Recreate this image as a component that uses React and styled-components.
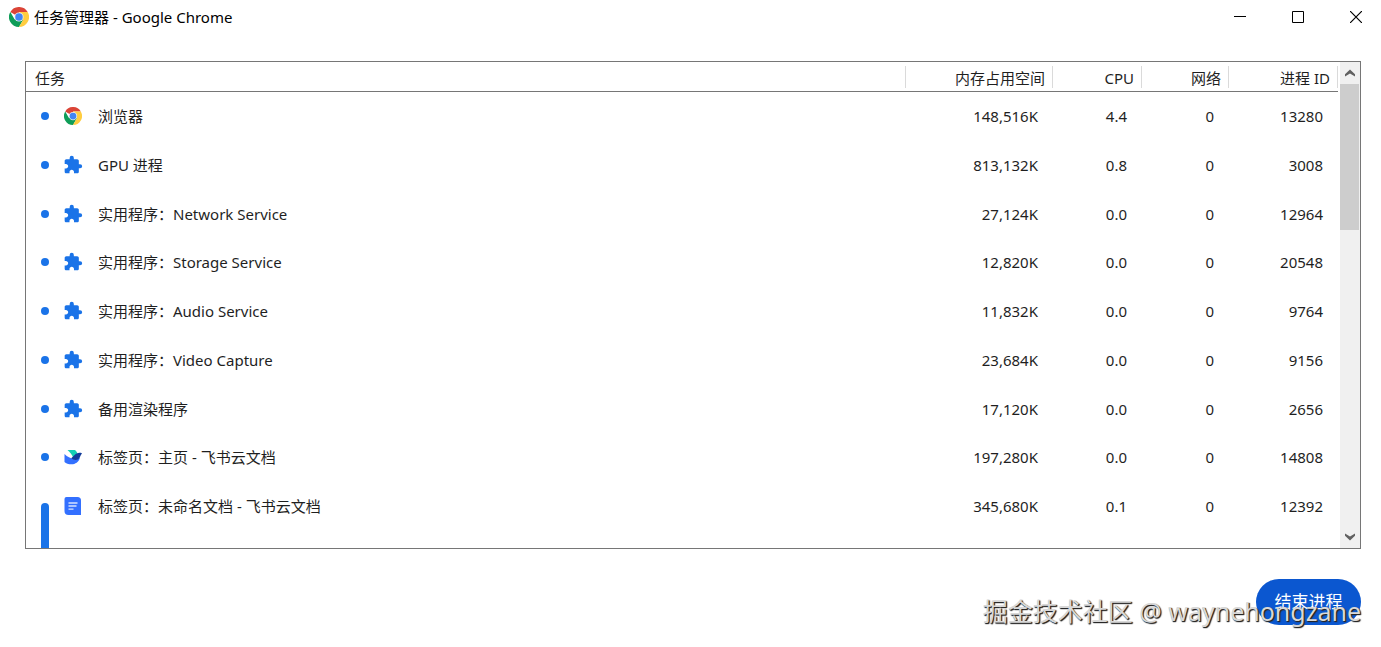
import React from 'react';
import styled, { createGlobalStyle } from 'styled-components';
import { MdExtension } from 'react-icons/md';

const GlobalStyle = createGlobalStyle`
  *, *::before, *::after { box-sizing: border-box; }
  body {
    margin: 0;
    background: #fff;
    color: #1f1f1f;
    font: 15px/20px "Noto Sans", "Noto Sans CJK SC", sans-serif;
  }
  button { font: inherit; border: 0; padding: 0; }
`;

const Window = styled.div`
  position: relative;
  display: flex;
  flex-direction: column;
  height: 100vh;
  min-height: 320px;
  overflow: hidden;
`;

const TitleBar = styled.header`
  display: flex;
  align-items: center;
  gap: 5px;
  height: 34px;
  padding-left: 9px;
  flex: none;
`;

const Title = styled.h1`
  margin: 0;
  flex: 1;
  font-size: 15px;
  font-weight: 400;
  color: #000;
`;

const WindowControls = styled.div`
  display: flex;
  gap: 8px;
`;

const ControlButton = styled.button`
  display: flex;
  align-items: center;
  justify-content: center;
  width: 50px;
  height: 34px;
  background: transparent;
  color: #000;
`;

const Content = styled.main`
  display: flex;
  flex-direction: column;
  flex: 1;
  min-height: 0;
  gap: 30px;
  padding: 27px 20px 22px 25px;
`;

const Panel = styled.section`
  display: flex;
  flex: 1;
  min-height: 0;
  border: 1px solid #767676;
`;

const Viewport = styled.div`
  flex: 1;
  min-width: 0;
  overflow: hidden;
  padding-right: 2px;
`;

const TaskTable = styled.table`
  width: 100%;
  table-layout: fixed;
  border-collapse: separate;
  border-spacing: 0;
`;

const Column = styled.col`
  width: ${(p) => (p.$width ? `${p.$width}px` : 'auto')};
`;

const HeadCell = styled.th`
  height: 30px;
  padding: 2px 8px 0 9px;
  border-bottom: 1px solid #767676;
  background: linear-gradient(#dadada, #dadada) right center / 1px 22px no-repeat;
  font-weight: 400;
  text-align: ${(p) => p.$align};
`;

const Row = styled.tr`
  height: 49px;
  &:nth-child(4n) { height: 48px; }
`;

const Cell = styled.td`
  padding: 0 0 2px;
`;

const NumberCell = styled(Cell)`
  padding-right: 15px;
  text-align: right;
`;

const MarkerCell = styled(Cell)`
  padding-left: 15px;
  vertical-align: ${(p) => (p.$group ? 'top' : 'middle')};
`;

const Marker = styled.div`
  width: 8px;
  height: ${(p) => (p.$group ? '74px' : '8px')};
  margin-top: ${(p) => (p.$group ? '21px' : '0')};
  border-radius: 4px;
  background: #1a73e8;
`;

const TaskName = styled.div`
  display: flex;
  align-items: center;
  gap: 16px;
  white-space: nowrap;
`;

const IconSlot = styled.span`
  display: flex;
  align-items: center;
  justify-content: center;
  width: 18px;
  height: 20px;
  flex: none;
  color: #1a73e8;
  svg { flex: none; }
`;

const Scrollbar = styled.div`
  display: flex;
  flex-direction: column;
  width: 20px;
  flex: none;
  padding-right: 1px;
  background: #f0f0f0;
`;

const ScrollButton = styled.button`
  display: flex;
  align-items: center;
  justify-content: center;
  height: 22px;
  flex: none;
  background: #f0f0f0;
  color: #606060;
`;

const ScrollTrack = styled.div`
  flex: 1;
  min-height: 0;
`;

const ScrollThumb = styled.div`
  height: 33%;
  background: #cdcdcd;
`;

const Footer = styled.footer`
  display: flex;
  justify-content: flex-end;
  flex: none;
`;

const EndButton = styled.button`
  width: 105px;
  height: 46px;
  border-radius: 23px;
  background: #0b57d0;
  color: #fff;
  font-size: 17px;
`;

const Watermark = styled.div`
  position: absolute;
  right: 20px;
  bottom: 18px;
  color: #d8d8d8;
  font: 25px/36px "Noto Sans", "Noto Sans CJK SC", sans-serif;
  text-shadow: 1px 1px 1px #222, 1px 1px 1px #444;
  white-space: nowrap;
  pointer-events: none;
`;

const ChromeIcon = ({ size }) => (
  <svg width={size} height={size} viewBox="0 0 48 48" aria-hidden="true">
    <path d="M24 24 3.2 12A24 24 0 0 1 44.8 12H24Z" fill="#db4437" />
    <path d="M3.2 12A24 24 0 0 0 24 48L34.4 30 24 24 13.6 30Z" fill="#0f9d58" />
    <path d="M44.8 12A24 24 0 0 1 24 48L34.4 30 24 12Z" fill="#ffcd40" />
    <circle cx="24" cy="24" r="11" fill="#f1f1f1" />
    <circle cx="24" cy="24" r="9" fill="#4285f4" />
  </svg>
);

const FeishuIcon = () => (
  <svg width="18" height="18" viewBox="0 0 18 18" aria-hidden="true">
    <path d="M3.500 2H11C12.500 3.200 13.300 4.800 13.600 6.200L9.300 9.800C8 6.800 6 4 3.500 2Z" fill="#14d0b4" />
    <path d="M.5 6c3 3 6.500 4.700 9.300 4.500l6-.5c-1 4-4.500 6.300-8.300 6.300-3 0-5.500-.8-7-2.300Z" fill="#3370ff" />
    <path d="M18 5.300c-3-1-5.700-.2-7.700 2L7.200 10.300c2.800 2 6.300 2.300 8.300-.3 .9-1.500 1.300-3.200 2.500-4.700Z" fill="#133c9a" />
  </svg>
);

const DocIcon = () => (
  <svg width="18" height="18" viewBox="0 0 18 18" aria-hidden="true">
    <path d="M2.500 0H13.500Q17 0 17 3.500V18H4.500Q.5 18 .5 14V2Q.5 0 2.500 0Z" fill="#3370ff" />
    <path d="M4.500 6h9M4.500 9h8M4.500 12.200h5" stroke="#d6e2ff" strokeWidth="1.300" />
  </svg>
);

const icons = {
  chrome: <ChromeIcon size={18} />,
  extension: <MdExtension size={20} />,
  feishu: <FeishuIcon />,
  doc: <DocIcon />,
};

const tasks = [
  { icon: 'chrome', name: '浏览器', memory: '148,516K', cpu: '4.4', network: '0', pid: '13280' },
  { icon: 'extension', name: 'GPU 进程', memory: '813,132K', cpu: '0.8', network: '0', pid: '3008' },
  { icon: 'extension', name: '实用程序：Network Service', memory: '27,124K', cpu: '0.0', network: '0', pid: '12964' },
  { icon: 'extension', name: '实用程序：Storage Service', memory: '12,820K', cpu: '0.0', network: '0', pid: '20548' },
  { icon: 'extension', name: '实用程序：Audio Service', memory: '11,832K', cpu: '0.0', network: '0', pid: '9764' },
  { icon: 'extension', name: '实用程序：Video Capture', memory: '23,684K', cpu: '0.0', network: '0', pid: '9156' },
  { icon: 'extension', name: '备用渲染程序', memory: '17,120K', cpu: '0.0', network: '0', pid: '2656' },
  { icon: 'feishu', name: '标签页：主页 - 飞书云文档', memory: '197,280K', cpu: '0.0', network: '0', pid: '14808' },
  { icon: 'doc', name: '标签页：未命名文档 - 飞书云文档', memory: '345,680K', cpu: '0.1', network: '0', pid: '12392', group: true },
];

const TaskRow = ({ task }) => (
  <Row>
    <MarkerCell $group={task.group} rowSpan={task.group ? 2 : 1}>
      <Marker $group={task.group} />
    </MarkerCell>
    <Cell>
      <TaskName>
        <IconSlot>{icons[task.icon]}</IconSlot>
        <span>{task.name}</span>
      </TaskName>
    </Cell>
    <NumberCell>{task.memory}</NumberCell>
    <NumberCell>{task.cpu}</NumberCell>
    <NumberCell>{task.network}</NumberCell>
    <NumberCell>{task.pid}</NumberCell>
  </Row>
);

export default function App() {
  return (
    <>
      <GlobalStyle />
      <Window>
        <TitleBar>
          <ChromeIcon size={20} />
          <Title>任务管理器 - Google Chrome</Title>
          <WindowControls>
            <ControlButton aria-label="最小化">
              <svg width="12" height="12" viewBox="0 0 12 12"><path d="M0 5.500h12" stroke="currentColor" /></svg>
            </ControlButton>
            <ControlButton aria-label="最大化">
              <svg width="12" height="12" viewBox="0 0 12 12"><path d="M.5.5h11v11H.5Z" fill="none" stroke="currentColor" /></svg>
            </ControlButton>
            <ControlButton aria-label="关闭">
              <svg width="12" height="12" viewBox="0 0 12 12"><path d="m0 0 12 12M12 0 0 12" stroke="currentColor" strokeWidth="1.200" /></svg>
            </ControlButton>
          </WindowControls>
        </TitleBar>
        <Content>
          <Panel>
            <Viewport>
              <TaskTable>
                <colgroup>
                  <Column $width={38} />
                  <Column />
                  <Column $width={147} />
                  <Column $width={89} />
                  <Column $width={87} />
                  <Column $width={109} />
                </colgroup>
                <thead>
                  <tr>
                    <HeadCell colSpan={2} $align="left">任务</HeadCell>
                    <HeadCell $align="right">内存占用空间</HeadCell>
                    <HeadCell $align="right">CPU</HeadCell>
                    <HeadCell $align="right">网络</HeadCell>
                    <HeadCell $align="right">进程 ID</HeadCell>
                  </tr>
                </thead>
                <tbody>
                  {tasks.map((task) => <TaskRow key={task.pid} task={task} />)}
                  <Row><Cell colSpan={5} /></Row>
                </tbody>
              </TaskTable>
            </Viewport>
            <Scrollbar>
              <ScrollButton aria-label="向上滚动">
                <svg width="10" height="8" viewBox="0 0 10 8"><path d="M5 0.500 10 5.200V7.500L5 4.500 0 7.500V5.200Z" fill="currentColor" /></svg>
              </ScrollButton>
              <ScrollTrack><ScrollThumb /></ScrollTrack>
              <ScrollButton aria-label="向下滚动">
                <svg width="10" height="8" viewBox="0 0 10 8"><path d="M5 7.500 10 2.800V.5L5 3.500 0 .5V2.800Z" fill="currentColor" /></svg>
              </ScrollButton>
            </Scrollbar>
          </Panel>
          <Footer>
            <EndButton>结束进程</EndButton>
          </Footer>
        </Content>
        <Watermark>掘金技术社区 @ waynehongzane</Watermark>
      </Window>
    </>
  );
}
